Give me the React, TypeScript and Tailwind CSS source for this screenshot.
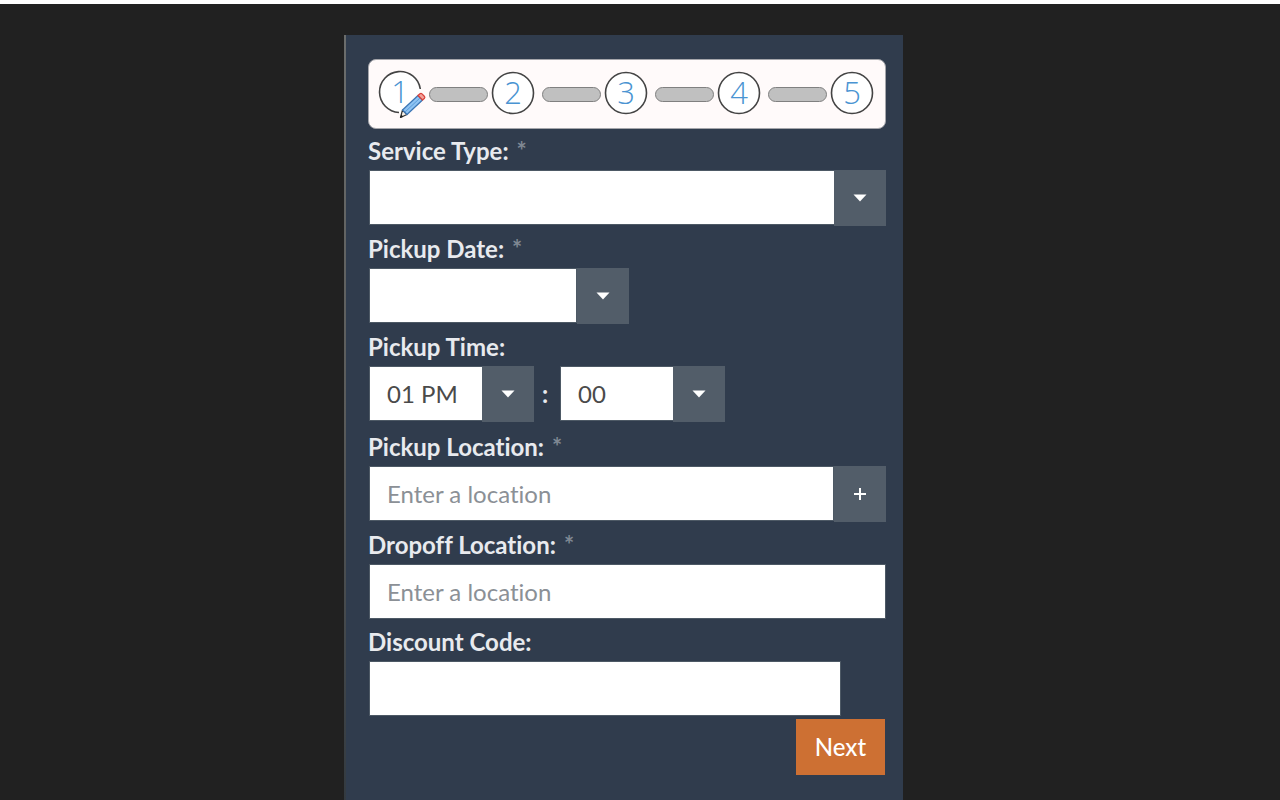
import { useState } from 'react'
import type { ReactNode } from 'react'
import clsx from 'clsx'

const steps = [1, 2, 3, 4, 5]
const services = ['', 'Airport Transfer', 'Hourly', 'Point to Point']
const hours = ['01 PM', '02 PM', '03 PM', '04 PM']
const minutes = ['00', '15', '30', '45']

const inputClass =
  'h-[55px] min-w-0 border border-[#4d5965] bg-white px-[17px] text-2xl text-[#4a4a4a] placeholder:text-[#8b9096] placeholder:opacity-100 outline-none'
const addonClass = 'flex h-14 w-[52px] shrink-0 items-center justify-center bg-[#525d69] text-white'

function Caret() {
  return (
    <svg viewBox="0 0 14 8" className="h-2 w-3.5" fill="currentColor" aria-hidden="true">
      <path d="M0.5 0.5h13L7 7.5z" />
    </svg>
  )
}

function Pencil() {
  return (
    <g strokeLinejoin="round">
      <path d="M22.5 45.5l2-7.5 4.5 4.5z" fill="#f6efe6" stroke="#333" strokeWidth="1.2" />
      <path d="M22.2 46l1-3.4 2.2 2.2z" fill="#222" />
      <path d="M24.5 38L40 23.5l4.5 4.5L29 42.5z" fill="#8fc3f3" stroke="#3c76b5" strokeWidth="1.3" />
      <path d="M27 40L42 26" stroke="#5d9edb" strokeWidth="1" />
      <path d="M40 23.5l2-1.8q1-.8 2 .2l2.3 2.3q1 1 .2 2l-2 1.8z" fill="#f3a29b" stroke="#d8433c" strokeWidth="1.3" />
    </g>
  )
}

function Step({ number, active }: { number: number; active: boolean }) {
  return (
    <svg
      viewBox="0 0 44 44"
      className="size-11 shrink-0 overflow-visible"
      role="img"
      aria-label={`Step ${number}`}
    >
      <circle cx="22" cy={active ? 20 : 21} r="20.5" fill="#fff" />
      {active ? (
        <path d="M42.3 17A20.5 20.5 0 1 0 21 40.5" fill="none" stroke="#444" strokeWidth="1.6" />
      ) : (
        <circle cx="22" cy="21" r="20.5" fill="none" stroke="#444" strokeWidth="1.6" />
      )}
      <text
        x="22"
        y={active ? 31 : 32}
        textAnchor="middle"
        fill="#4a94d2"
        fontSize="31"
        fontWeight="300"
        fontFamily="'Open Sans', sans-serif"
      >
        {number}
      </text>
      {active && <Pencil />}
    </svg>
  )
}

function Stepper({ current }: { current: number }) {
  return (
    <div className="flex h-[70px] items-center rounded-lg border border-[#a5a6ab] bg-[#fffafa] pr-[11px] pl-[9px]">
      {steps.map((number, i) => (
        <div key={number} className={clsx('flex items-center', i > 0 && 'flex-1')}>
          {i > 0 && <span className="mr-[3px] ml-[7px] h-[15px] flex-1 rounded-full border border-[#808080] bg-[#c0c0c0]" />}
          <Step number={number} active={number === current} />
        </div>
      ))}
    </div>
  )
}

function Field({ id, label, required, children }: { id: string; label: string; required?: boolean; children: ReactNode }) {
  return (
    <div>
      <label htmlFor={id} className="-ml-px flex h-[41px] items-center pt-0.5 text-2xl font-bold text-[#e8eaee]">
        {label}
        {required && <span className="ml-2 text-[#7f8893]">*</span>}
      </label>
      {children}
    </div>
  )
}

function Select({ id, label, options, className }: { id: string; label?: string; options: string[]; className: string }) {
  return (
    <div className={clsx('relative flex h-14 items-start', className)}>
      <select id={id} aria-label={label} className={clsx(inputClass, 'w-full appearance-none')}>
        {options.map((option) => (
          <option key={option}>{option}</option>
        ))}
      </select>
      <span className={clsx(addonClass, 'pointer-events-none absolute inset-y-0 right-0')}>
        <Caret />
      </span>
    </div>
  )
}

export default function App() {
  const [step, setStep] = useState(1)

  return (
    <div className="flex min-h-screen flex-col border-t-4 border-white bg-[#212121] pt-[31px] pr-[33px] font-['Lato',sans-serif] [font-variant-ligatures:none]">
      <main className="mx-auto flex w-full max-w-[559px] flex-1 bg-[#303c4d]">
        <div className="w-0.5 shrink-0 bg-linear-to-b from-[#6b6d6c] via-[#5a5b5a] to-[#333a40]" />
        <form
          className="min-w-0 flex-1 pt-6 pr-[17px] pb-[25px] pl-[22px]"
          onSubmit={(e) => {
            e.preventDefault()
            setStep(Math.min(step + 1, steps.length))
          }}
        >
          <Stepper current={step} />

          <div className="flex flex-col gap-px pl-px">
            <Field id="service" label="Service Type:" required>
              <Select id="service" options={services} className="w-full" />
            </Field>

            <Field id="date" label="Pickup Date:" required>
              <div className="flex w-[260px] items-start">
                <input id="date" type="text" className={clsx(inputClass, 'flex-1')} />
                <button type="button" aria-label="Open calendar" className={addonClass}>
                  <Caret />
                </button>
              </div>
            </Field>

            <Field id="hour" label="Pickup Time:">
              <div className="flex items-center pb-0.5">
                <Select id="hour" options={hours} className="w-[165px]" />
                <span className="w-[26px] pr-1 text-center text-2xl font-bold text-[#e8eaee]">:</span>
                <Select id="minute" label="Minutes" options={minutes} className="w-[165px]" />
              </div>
            </Field>

            <Field id="pickup" label="Pickup Location:" required>
              <div className="flex items-start">
                <input id="pickup" type="text" placeholder="Enter a location" className={clsx(inputClass, 'flex-1')} />
                <button type="button" aria-label="Add stop" className={addonClass}>
                  <svg viewBox="0 0 14 14" className="size-3.5" stroke="currentColor" strokeWidth="2" aria-hidden="true">
                    <path d="M7 1v12M1 7h12" />
                  </svg>
                </button>
              </div>
            </Field>

            <Field id="dropoff" label="Dropoff Location:" required>
              <input id="dropoff" type="text" placeholder="Enter a location" className={clsx(inputClass, 'block w-full')} />
            </Field>

            <Field id="discount" label="Discount Code:">
              <input id="discount" type="text" className={clsx(inputClass, 'block w-[472px] max-w-full')} />
            </Field>

            <div className="flex justify-end pt-0.5 pr-px">
              <button type="submit" className="h-14 w-[89px] bg-[#cd7033] text-2xl font-medium text-white">
                Next
              </button>
            </div>
          </div>
        </form>
      </main>
    </div>
  )
}
